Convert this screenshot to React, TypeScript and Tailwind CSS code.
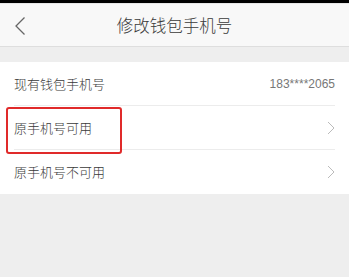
import React from "react";

const font = { fontFamily: '"Noto Sans CJK SC", "Noto Sans", sans-serif' };

function Chevron({ left = false }: { left?: boolean }) {
  return (
    <svg width={left ? 12 : 8} height={left ? 20 : 14} viewBox={left ? "0 0 12 20" : "0 0 8 14"} fill="none">
      {left ? (
        <path d="M10.5 1.5 2 10l8.5 8.5" stroke="#666" strokeWidth="1.3" />
      ) : (
        <path d="M1 1l6 6-6 6" stroke="#bbb" strokeWidth="1" />
      )}
    </svg>
  );
}

export default function App() {
  return (
    <div className="w-[349px] h-[277px] bg-[#eeeeee] overflow-hidden" style={font}>
      <div className="h-[3px] bg-black" />
      <div className="h-[1px] bg-[#e6e6e6]" />
      <header className="relative h-[43px] bg-[#f8f8f8] border-b border-[#dedede] flex items-center justify-center">
        <div className="absolute left-[14px] top-[12px]">
          <Chevron left />
        </div>
        <h1 className="text-[16.5px] text-[#3a3a3a] font-light">修改钱包手机号</h1>
      </header>

      <div className="mt-[15px] bg-white relative">
        <div className="h-[44px] mx-[14px] flex items-center justify-between border-b border-[#ececec]">
          <span className="text-[13px] text-[#3a3a3a] font-light">现有钱包手机号</span>
          <span className="text-[12px] text-[#777]" style={{ fontFamily: '"Liberation Sans", sans-serif' }}>
            183****2065
          </span>
        </div>
        <div className="h-[44px] mx-[14px] flex items-center justify-between border-b border-[#ececec]">
          <span className="text-[13px] text-[#3a3a3a] font-light">原手机号可用</span>
          <Chevron />
        </div>
        <div className="h-[44px] mx-[14px] flex items-center justify-between">
          <span className="text-[13px] text-[#3a3a3a] font-light">原手机号不可用</span>
          <Chevron />
        </div>

        {/* red annotation */}
        <div className="absolute left-[6px] top-[45px] w-[116px] h-[47px] border-[2.5px] border-[#e02a2a] rounded-[3px] pointer-events-none" />
      </div>
    </div>
  );
}
